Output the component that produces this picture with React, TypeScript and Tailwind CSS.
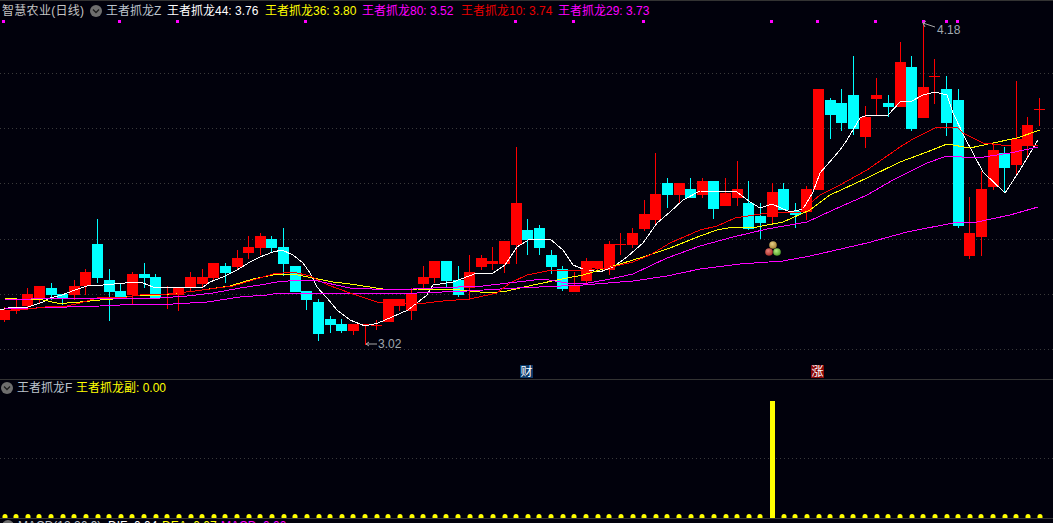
const candles: [string, number, number, number, number][] = [
  ["r", 310, 320, 307, 322], ["r", 307, 310, 300, 314], ["r", 294, 306, 288, 310], ["r", 286, 298, 286, 303],
  ["c", 288, 295, 283, 300], ["c", 294, 299, 294, 305], ["r", 286, 295, 280, 300], ["r", 272, 286, 269, 295],
  ["c", 244, 278, 219, 283], ["c", 280, 292, 269, 321], ["c", 291, 297, 283, 298], ["r", 274, 295, 272, 305],
  ["c", 274, 278, 263, 288], ["c", 277, 298, 274, 298], ["r", 294, 295, 286, 309], ["r", 288, 295, 288, 311],
  ["r", 277, 288, 272, 292], ["r", 277, 284, 269, 287], ["r", 263, 278, 263, 281], ["c", 266, 273, 263, 283],
  ["r", 258, 267, 250, 270], ["r", 247, 253, 236, 259], ["r", 236, 248, 233, 255], ["c", 239, 248, 236, 252],
  ["c", 247, 264, 228, 276], ["c", 266, 292, 266, 292], ["c", 291, 300, 291, 310], ["c", 302, 334, 299, 341],
  ["c", 319, 325, 316, 333], ["c", 324, 331, 319, 333], ["r", 324, 331, 324, 335], ["r", 324, 325, 324, 345],
  ["r", 325, 326, 320, 330], ["r", 299, 322, 299, 322], ["r", 299, 306, 299, 311], ["r", 294, 311, 288, 320],
  ["r", 277, 284, 266, 288], ["r", 261, 278, 261, 283], ["c", 261, 281, 261, 288], ["c", 280, 295, 266, 297],
  ["r", 272, 288, 255, 299], ["r", 258, 267, 255, 270], ["r", 261, 264, 247, 270], ["r", 241, 264, 241, 273],
  ["r", 203, 245, 147, 264], ["c", 230, 240, 219, 255], ["c", 228, 248, 225, 255], ["c", 255, 267, 250, 274],
  ["c", 269, 289, 266, 291], ["r", 286, 292, 272, 292], ["r", 261, 281, 258, 284], ["r", 261, 268, 261, 272],
  ["r", 244, 270, 241, 275], ["r", 244, 245, 233, 255], ["r", 233, 245, 228, 248], ["r", 214, 229, 200, 231],
  ["r", 194, 220, 153, 226], ["c", 183, 195, 178, 208], ["r", 183, 195, 183, 204], ["c", 189, 198, 178, 198],
  ["r", 181, 195, 178, 198], ["c", 181, 209, 181, 219], ["r", 193, 206, 178, 206], ["r", 189, 198, 161, 206],
  ["c", 203, 229, 181, 230], ["c", 216, 223, 203, 239], ["r", 192, 217, 183, 223], ["c", 189, 210, 183, 210],
  ["c", 211, 215, 203, 228], ["r", 189, 212, 186, 220], ["r", 89, 190, 89, 190], ["c", 100, 115, 98, 139],
  ["c", 103, 123, 89, 131], ["c", 95, 129, 56, 135], ["r", 117, 137, 106, 148], ["r", 95, 99, 78, 115],
  ["c", 103, 107, 95, 117], ["r", 62, 107, 42, 107], ["c", 67, 129, 56, 131], ["r", 87, 118, 22, 118],
  ["r", 76, 77, 59, 104], ["c", 89, 123, 76, 136], ["c", 100, 226, 89, 228], ["r", 233, 256, 197, 259],
  ["r", 189, 237, 171, 256], ["r", 150, 187, 143, 190], ["c", 153, 168, 147, 193], ["r", 139, 165, 81, 175],
  ["r", 125, 145, 117, 159], ["r", 109, 110, 98, 126],
];

const whiteLine = "0,310 8,308 28,307 43,302 50,298 62,295 75,290 87,286 103,285 125,283 133,282 143,283 153,287 163,288 173,287 203,287 210,282 223,277 237,270 250,262 260,257 273,252 282,250 293,255 303,263 310,273 317,287 327,298 337,310 350,320 365,326 378,323 392,317 408,310 427,295 433,285 453,282 477,273 493,273 505,265 517,247 530,239 550,239 563,250 573,265 583,269 600,272 613,267 627,257 643,243 657,223 670,212 683,200 700,191 737,192 750,202 760,208 772,204 790,212 803,209 813,192 820,173 840,150 847,140 860,118 867,115 888,115 900,102 912,101 923,95 935,92 947,95 953,113 965,138 983,172 1005,193 1020,170 1038,140";
const redLine = "0,310 20,310 45,307 67,306 80,303 97,298 127,297 140,295 167,294 195,291 217,288 233,286 253,280 273,274 293,272 310,276 328,285 350,293 377,302 417,304 443,301 470,299 497,293 510,283 527,275 547,271 583,270 607,268 633,262 650,255 670,243 700,230 717,226 735,218 767,213 800,212 820,195 840,185 867,170 900,147 913,139 937,127 957,127 963,133 983,143 1010,146 1038,145";
const yellowLine = "5,298 17,299 43,300 57,303 67,303 80,302 100,300 113,299 140,295 160,295 195,291 230,286 253,279 273,275 293,274 313,278 333,282 350,284 383,289 417,289 460,290 490,293 507,291 533,285 567,278 583,275 610,267 643,257 670,248 700,236 717,230 733,227 757,227 783,222 810,210 830,195 867,178 900,162 927,152 947,144 970,148 993,143 1017,138 1040,130";
const magentaLine = "5,300 57,298 117,298 160,298 187,296 213,293 240,288 260,285 277,282 300,280 313,280 350,288 393,290 433,288 483,286 517,282 543,279 567,283 583,284 610,279 633,274 667,258 700,246 733,237 767,229 807,222 833,210 867,195 893,180 927,163 947,156 977,158 1010,153 1038,147";
const longLine = "5,309 67,307 100,306 140,304 173,304 207,302 240,297 267,295 280,293 350,293 417,293 467,291 517,288 583,285 633,281 667,276 700,269 740,264 783,261 810,256 867,243 907,232 953,223 977,222 1010,215 1038,207";

const topMarks = [2, 118, 176, 304, 514, 572, 642, 770, 816, 874, 922, 945, 956];
const gridUpper = [73, 128, 183, 239, 294, 349];
const candleX = (i: number) => 4.5 + 11.63 * i;

function Chevron() {
  return (
    <span className="flex h-3 w-3 shrink-0 items-center justify-center rounded-full bg-[#6e6e6e]">
      <svg width="8" height="6" viewBox="0 0 8 6">
        <path d="M1 1.5 L4 4.5 L7 1.5" fill="none" stroke="#1c1c1c" strokeWidth="1.3" />
      </svg>
    </span>
  );
}

function MainChart() {
  return (
    <svg className="absolute inset-0" width="1053" height="378" viewBox="0 1 1053 378">
      <defs>
        <radialGradient id="ballTop" cx="40%" cy="35%" r="70%">
          <stop offset="0%" stopColor="#e8d088" />
          <stop offset="100%" stopColor="#a07c2c" />
        </radialGradient>
        <radialGradient id="ballRed" cx="40%" cy="35%" r="70%">
          <stop offset="0%" stopColor="#e88078" />
          <stop offset="100%" stopColor="#a82a24" />
        </radialGradient>
        <radialGradient id="ballGreen" cx="40%" cy="35%" r="70%">
          <stop offset="0%" stopColor="#b8ec80" />
          <stop offset="100%" stopColor="#4c9c24" />
        </radialGradient>
      </defs>
      <g shapeRendering="crispEdges">
        {gridUpper.map((y) => (
          <line key={y} x1="0" x2="1053" y1={y + 0.5} y2={y + 0.5} stroke="#3a3a3a" strokeDasharray="1 3" />
        ))}
        {topMarks.map((x) => (
          <rect key={x} x={x} y="20" width="3" height="3" fill="#ff00ff" />
        ))}
        {candles.map(([kind, top, bottom, wickTop, wickBottom], i) => {
          const left = Math.round(candleX(i) - 5.5);
          const color = kind === "r" ? "#ff0000" : "#00ffff";
          return (
            <g key={i} fill={color}>
              <rect x={left + 5} y={wickTop} width="1" height={wickBottom - wickTop} />
              <rect x={left} y={top} width="11" height={Math.max(bottom - top, 1)} />
            </g>
          );
        })}
        <g fill="none" strokeWidth="1">
          <polyline points={whiteLine} stroke="#ffffff" />
          <polyline points={yellowLine} stroke="#ffff00" />
          <polyline points={longLine} stroke="#ff00ff" />
          <polyline points={redLine} stroke="#ff0000" />
          <polyline points={magentaLine} stroke="#ff00ff" />
        </g>
      </g>
      <g fill="none" stroke="#a8a8a8" strokeWidth="1">
        <path d="M923 23 L935 27 M923 23 L926 21 M923 23 L925 27" />
        <path d="M366 344 L377 344 M366 344 L369 342 M366 344 L369 346" />
      </g>
      <circle cx="773" cy="245" r="3.8" fill="url(#ballTop)" />
      <circle cx="769" cy="252" r="3.8" fill="url(#ballRed)" />
      <circle cx="777" cy="252" r="3.8" fill="url(#ballGreen)" />
    </svg>
  );
}

function SubChart() {
  return (
    <svg className="absolute inset-0" width="1053" height="138" viewBox="0 380 1053 138">
      <line x1="0" x2="1053" y1="458.5" y2="458.5" stroke="#3a3a3a" strokeDasharray="1 3" shapeRendering="crispEdges" />
      {candles.map((_, i) =>
        i === 66 ? (
          <rect key={i} x="770" y="401" width="5" height="117" fill="#ffff00" shapeRendering="crispEdges" />
        ) : (
          <path
            key={i}
            d={`M${Math.round(candleX(i)) - 2.5} 518 v-1.5 a2.5 2.5 0 0 1 5 0 v1.5 z`}
            fill="#ffff00"
          />
        ),
      )}
    </svg>
  );
}

export default function App() {
  return (
    <div className="flex h-[523px] w-[1053px] flex-col overflow-hidden border-t border-[#333333] bg-[#01010c] font-['Liberation_Sans','Noto_Sans_CJK_SC',sans-serif] text-[12px] leading-[14px]">
      <div className="relative h-[378px] shrink-0">
        <MainChart />
        <div className="relative flex items-center whitespace-nowrap pt-[3px]">
          <span className="ml-[2px] w-[88px] tracking-[0.3px] text-[#c4c4c4]">智慧农业(日线)</span>
          <Chevron />
          <span className="ml-[4px] w-[61px] text-[#bcc4cc]">王者抓龙Z</span>
          <span className="w-[98px] text-white">王者抓龙44: 3.76</span>
          <span className="w-[97px] text-[#ffff00]">王者抓龙36: 3.80</span>
          <span className="w-[99px] text-[#ff00ff]">王者抓龙80: 3.52</span>
          <span className="w-[97px] text-[#e80000]">王者抓龙10: 3.74</span>
          <span className="text-[#ff00ff]">王者抓龙29: 3.73</span>
        </div>
        <span className="absolute left-[937px] top-[22px] text-[#a0a8b0]">4.18</span>
        <span className="absolute left-[378px] top-[336px] text-[#a0a8b0]">3.02</span>
        <span className="absolute left-[520px] top-[364px] flex h-[13px] w-[13px] items-center justify-center bg-[#0a3868] text-white">财</span>
        <span className="absolute left-[811px] top-[364px] flex h-[13px] w-[13px] items-center justify-center bg-[#8a0808] text-white">涨</span>
      </div>
      <div className="relative h-[140px] shrink-0 border-y border-[#333333]">
        <SubChart />
        <div className="relative flex items-center whitespace-nowrap pt-[1px]">
          <span className="ml-[1px]"><Chevron /></span>
          <span className="ml-[4px] w-[59px] text-[#bcc4cc]">王者抓龙F</span>
          <span className="text-[#ffff00]">王者抓龙副: 0.00</span>
        </div>
      </div>
      <div className="flex shrink-0 items-center whitespace-nowrap">
        <span className="ml-[2px]"><Chevron /></span>
        <span className="ml-[4px] w-[90px] text-[#bcc4cc]">MACD(12,26,9)</span>
        <span className="w-[54px] text-white">DIF: 0.04</span>
        <span className="w-[59px] text-[#ffff00]">DEA: 0.07</span>
        <span className="text-[#ff00ff]">MACD: 0.00</span>
      </div>
    </div>
  );
}
